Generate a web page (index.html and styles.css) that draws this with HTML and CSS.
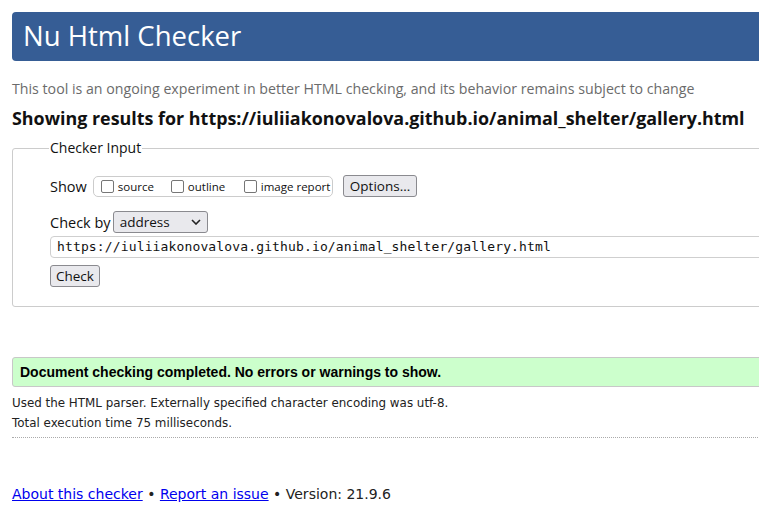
FILE: index.html
```html
<!DOCTYPE html>
<html>
<head>
<meta charset="utf-8">
<title>Nu Html Checker</title>
<link rel="stylesheet" href="styles.css">
</head>
<body>
<div class="page">
  <h1 class="banner">Nu Html Checker</h1>
  <p class="intro">This tool is an ongoing experiment in better HTML checking, and its behavior remains subject to change</p>
  <h2 class="showing">Showing results for https://iuliiakonovalova.github.io/animal_shelter/gallery.html</h2>
  <fieldset class="checker">
    <legend>Checker Input</legend>
    <div class="row show-row">
      <span class="label">Show</span>
      <span class="opts">
        <label class="opt"><span class="box"></span>source</label>
        <label class="opt"><span class="box"></span>outline</label>
        <label class="opt"><span class="box"></span>image report</label>
      </span>
      <span class="btn">Options…</span>
    </div>
    <div class="row by-row">
      <span class="label">Check by</span>
      <span class="select">address<svg class="chev" width="10" height="6" viewBox="0 0 10 6"><path d="M1 1 L5 5 L9 1" fill="none" stroke="#222" stroke-width="1.6"/></svg></span>
    </div>
    <div class="url">https://iuliiakonovalova.github.io/animal_shelter/gallery.html</div>
    <div class="row"><span class="btn">Check</span></div>
  </fieldset>
  <div class="success">Document checking completed. No errors or warnings to show.</div>
  <p class="details">Used the HTML parser. Externally specified character encoding was utf-8.</p>
  <p class="details">Total execution time 75 milliseconds.</p>
  <div class="dotted"></div>
  <p class="footer"><a href="#">About this checker</a> • <a href="#">Report an issue</a> • Version: 21.9.6</p>
</div>
</body>
</html>
```
FILE: styles.css
```css
html, body {
  margin: 0;
  padding: 0;
  background: #fff;
  overflow: hidden;
}
.page {
  width: 1000px;
  padding: 12px;
  font-family: "Open Sans", sans-serif;
  color: #111;
}
.banner {
  margin: 0;
  height: 49px;
  box-sizing: border-box;
  background: #365d95;
  color: #fff;
  border-radius: 4px 0 0 4px;
  font-weight: normal;
  font-size: 27.5px;
  line-height: 47px;
  padding-left: 11px;
}
.intro {
  margin: 18px 0 0;
  font-size: 14.2px;
  line-height: 20px;
  color: #6b6b6b;
}
.showing {
  margin: 8px 0 0;
  font-size: 17.9px;
  line-height: 22px;
  font-weight: bold;
  color: #111;
}
.checker {
  margin: 10px 0 0;
  border: 1px solid #cccccc;
  border-radius: 3px;
  padding: 16px 0 18px 37px;
  height: 168px;
  box-sizing: border-box;
}
.checker legend {
  font-size: 14px;
  padding: 0 1px;
  margin-left: -1px;
  line-height: 18px;
  color: #111;
}
.row {
  display: flex;
  align-items: center;
}
.label {
  font-size: 14.5px;
  margin-right: 3px;
}
.show-row {
  height: 22px;
  margin-top: 2px;
}
.show-row .label {
  margin-right: 6px;
}
.opts {
  display: flex;
  align-items: center;
  flex: none;
  height: 21px;
  box-sizing: border-box;
  border: 1px solid #ccc;
  border-radius: 5px;
  width: 240px;
  padding-left: 7px;
  margin-right: 10px;
}
.opt {
  display: flex;
  align-items: center;
  font-size: 11.5px;
  color: #111;
}
.opt:nth-child(1) { width: 70px; }
.opt:nth-child(2) { width: 73px; }
.box {
  width: 13px;
  height: 13px;
  border: 1.5px solid #767676;
  border-radius: 2px;
  margin-right: 4px;
  box-sizing: border-box;
}
.btn {
  display: inline-block;
  height: 22px;
  box-sizing: border-box;
  border: 1px solid #8a8a8f;
  border-radius: 3px;
  background: #e9e9ed;
  font-size: 13.5px;
  line-height: 20px;
  padding: 0 5px;
  color: #111;
}
.show-row .btn {
  padding: 0 6px;
}
.by-row {
  margin-top: 14px;
  height: 22px;
}
.select {
  display: flex;
  align-items: center;
  justify-content: space-between;
  width: 95px;
  height: 22px;
  box-sizing: border-box;
  border: 1px solid #8a8a8f;
  border-radius: 3px;
  background: #e9e9ed;
  font-size: 13.5px;
  padding: 0 6px;
  margin-left: -1px;
}
.url {
  margin-top: 3px;
  height: 22px;
  box-sizing: border-box;
  border: 1px solid #cfcfcf;
  border-radius: 4px;
  font-family: "DejaVu Sans Mono", monospace;
  font-size: 13px;
  letter-spacing: 0.14px;
  line-height: 20px;
  padding-left: 6px;
  color: #111;
}
.checker .row:last-child {
  margin-top: 7px;
}
.success {
  margin-top: 50px;
  height: 30px;
  box-sizing: border-box;
  border: 1px solid #c8c8c8;
  border-radius: 3px;
  background: #ccffcc;
  font-family: "Liberation Sans", Arial, sans-serif;
  font-weight: bold;
  font-size: 14px;
  line-height: 28px;
  padding-left: 7px;
  color: #000;
}
.details {
  margin: 0;
  font-family: "DejaVu Sans", sans-serif;
  font-size: 11.9px;
  line-height: 20px;
  color: #222;
}
.success + .details { margin-top: 6px; }
.dotted {
  margin-top: 4px;
  border-top: 1px dotted #aaa;
}
.footer {
  margin: 46px 0 0;
  font-family: "DejaVu Sans", sans-serif;
  font-size: 14px;
  line-height: 20px;
  color: #222;
}
.footer a {
  color: #0000ee;
}
```
